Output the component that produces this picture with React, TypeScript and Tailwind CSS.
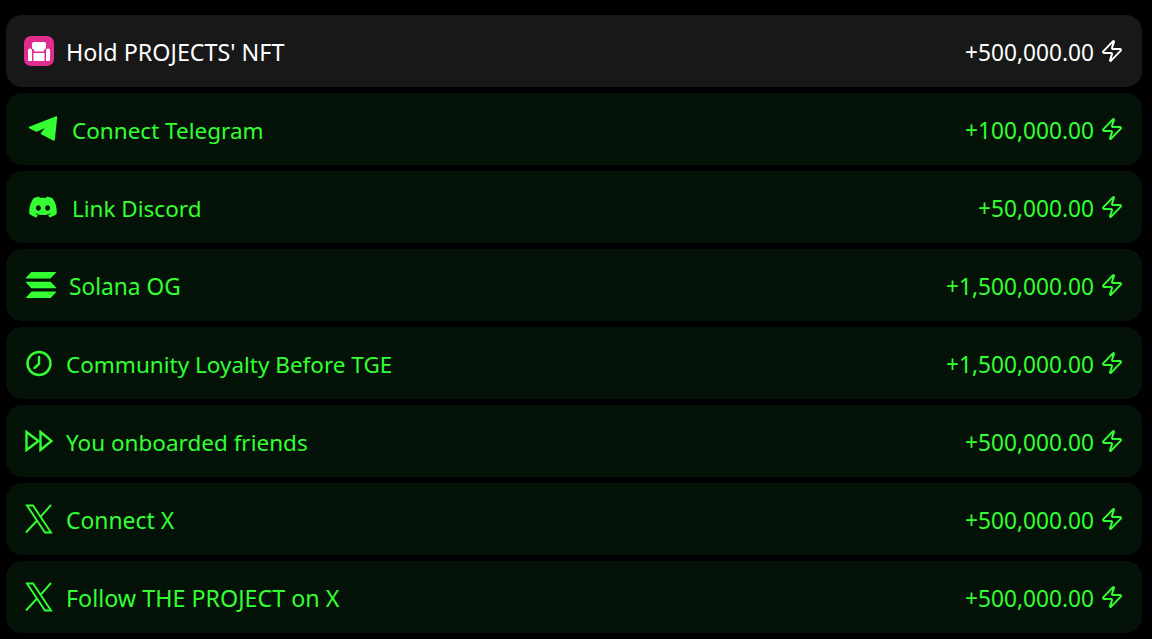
import { Zap } from "lucide-react";
import { FaDiscord } from "react-icons/fa";
import { SiSolana } from "react-icons/si";

function SofaIcon() {
	return (
		<div className="flex h-[30px] w-[30px] items-center justify-center rounded-[7px] bg-[#e02d8f]">
			<svg width="30" height="30" viewBox="0 0 30 30" fill="white">
				<path d="M8 8a2 2 0 0 1 2-2h10a2 2 0 0 1 2 2v4.500a3 3 0 0 0-2.500 3H10.500a3 3 0 0 0-2.500-3z" />
				<path d="M4 15a2 2 0 0 1 4-1v11H5a1 1 0 0 1-1-1z" />
				<path d="M22 14a2 2 0 0 1 4 1v9a1 1 0 0 1-1 1h-3z" />
				<path d="M9.500 17h11v8h-11z" />
			</svg>
		</div>
	);
}

function PlaneIcon() {
	return (
		<svg width="30" height="28" viewBox="0 0 30 28" fill="currentColor" stroke="currentColor" strokeWidth="1.500" strokeLinejoin="round">
			<path d="M1.500 12.500 28.500 2 26 25 13.500 18.500 19.500 11 8.500 16z" />
		</svg>
	);
}

function ClockIcon() {
	return (
		<svg width="28" height="28" viewBox="0 0 28 28" fill="none" stroke="currentColor" strokeWidth="2.400" strokeLinecap="round">
			<circle cx="14" cy="14.500" r="11.500" />
			<path d="M14 8v7L9.500 19" />
		</svg>
	);
}

function ForwardIcon() {
	return (
		<svg width="28" height="22" viewBox="0 0 28 22" fill="none" stroke="currentColor" strokeWidth="2.400">
			<path d="M1.500 2 13.500 11 1.500 20z" />
			<path d="M15.500 2 26.500 11 15.500 20z" />
		</svg>
	);
}

function XIcon() {
	return (
		<svg width="28" height="30" viewBox="0 0 28 30" fill="none" stroke="currentColor" strokeWidth="1.900">
			<path d="M2 1.500h6l18 27h-6z" />
			<path d="M26 1 15.500 12.800M12 16.500 1 28.500" />
		</svg>
	);
}

const rows = [
	{ label: "Hold PROJECTS' NFT", points: "+500,000.00", icon: <SofaIcon />, box: "ml-0 mr-3", size: "pt-[2px] text-[23.300px]", active: true },
	{ label: "Connect Telegram", points: "+100,000.00", icon: <PlaneIcon />, box: "ml-1 mr-[14px]", size: "pt-[4px] text-[22.500px]" },
	{ label: "Link Discord", points: "+50,000.00", icon: <FaDiscord size={30} />, box: "ml-1 mr-[14px]", size: "pt-[4px] text-[22.500px]" },
	{ label: "Solana OG", points: "+1,500,000.00", icon: <SiSolana size={30} />, box: "ml-[2px] mr-[13px]", size: "pt-[4px] text-[22.700px]" },
	{ label: "Community Loyalty Before TGE", points: "+1,500,000.00", icon: <ClockIcon />, box: "ml-0 mr-3", size: "pt-[4px] text-[22.500px]" },
	{ label: "You onboarded friends", points: "+500,000.00", icon: <ForwardIcon />, box: "ml-0 mr-3", size: "pt-[4px] text-[22.500px]" },
	{ label: "Connect X", points: "+500,000.00", icon: <XIcon />, box: "ml-0 mr-3", size: "pt-[4px] text-[22.900px]" },
	{ label: "Follow THE PROJECT on X", points: "+500,000.00", icon: <XIcon />, box: "ml-0 mr-3", size: "pt-[2px] text-[23.300px]" },
];

export default function App() {
	return (
		<div className="flex h-[639px] flex-col gap-[6px] overflow-hidden bg-black pt-[15px] pr-[10px] pl-[6px] font-['Noto_Sans','Open_Sans',sans-serif]">
			{rows.map((row) => (
				<div
					key={row.label}
					className={`flex h-[72px] shrink-0 items-center justify-between rounded-2xl px-[18px] text-[22.700px] ${
						row.active ? "bg-[#181818] text-white" : "bg-[#051207] text-[#33ff33]"
					}`}
				>
					<div className="flex items-center">
						<div className={`flex w-[30px] items-center justify-center ${row.box}`}>{row.icon}</div>
						<span className={row.size}>{row.label}</span>
					</div>
					<div className="flex items-center gap-[6px]">
						<span className="pt-[4px]">{row.points}</span>
						<Zap size={24} strokeWidth={2} />
					</div>
				</div>
			))}
		</div>
	);
}
